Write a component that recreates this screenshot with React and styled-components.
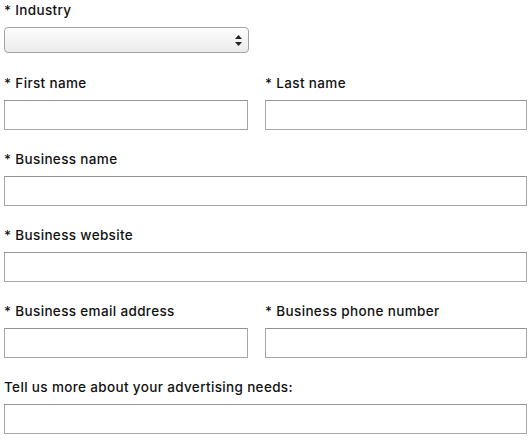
import React from 'react';
import styled, { createGlobalStyle } from 'styled-components';

const Global = createGlobalStyle`
  body {
    margin: 0;
    background: #fff;
    font-family: Inter, "DejaVu Sans", sans-serif;
  }
`;

const Form = styled.form`
  padding: 0 4px;
  width: 523px;
`;

const Row = styled.div`
  display: grid;
  grid-template-columns: ${(p) => (p.split ? '244px 1fr' : '1fr')};
  column-gap: 17px;
  margin-bottom: ${(p) => (p.first ? '20px' : '19px')};
`;

const Field = styled.div`
  display: flex;
  flex-direction: column;
`;

const Label = styled.label`
  font-size: 13.5px;
  line-height: 20px;
  color: #111;
  font-weight: 500;
  margin-bottom: 7px;
  letter-spacing: 0.35px;
`;

const Input = styled.input`
  box-sizing: border-box;
  height: 30px;
  width: 100%;
  border: 1px solid #a6a6a6;
  border-top-color: #949494;
  background: #fff;
  margin: 0;
`;

const SelectBox = styled.div`
  box-sizing: border-box;
  position: relative;
  width: 245px;
  height: 26px;
  border: 1px solid #a3a3a3;
  border-radius: 4px;
  background: linear-gradient(#fdfdfd, #ebebeb);
  box-shadow: inset 0 1px 0 #fff;
`;

const Arrows = styled.svg`
  position: absolute;
  right: 6px;
  top: 7px;
`;

const TextField = ({ label, required }) => (
  <Field>
    <Label>{required ? '* ' : ''}{label}</Label>
    <Input type="text" />
  </Field>
);

export default function App() {
  return (
    <>
      <Global />
      <Form>
        <Row first>
          <Field>
            <Label>* Industry</Label>
            <SelectBox>
              <Arrows width="7" height="11" viewBox="0 0 7 11">
                <path d="M3.5 0 L7 4 L0 4 Z" fill="#222" />
                <path d="M0 7 L7 7 L3.5 11 Z" fill="#222" />
              </Arrows>
            </SelectBox>
          </Field>
        </Row>
        <Row split>
          <TextField required label="First name" />
          <TextField required label="Last name" />
        </Row>
        <Row>
          <TextField required label="Business name" />
        </Row>
        <Row>
          <TextField required label="Business website" />
        </Row>
        <Row split>
          <TextField required label="Business email address" />
          <TextField required label="Business phone number" />
        </Row>
        <Row>
          <TextField label="Tell us more about your advertising needs:" />
        </Row>
      </Form>
    </>
  );
}
